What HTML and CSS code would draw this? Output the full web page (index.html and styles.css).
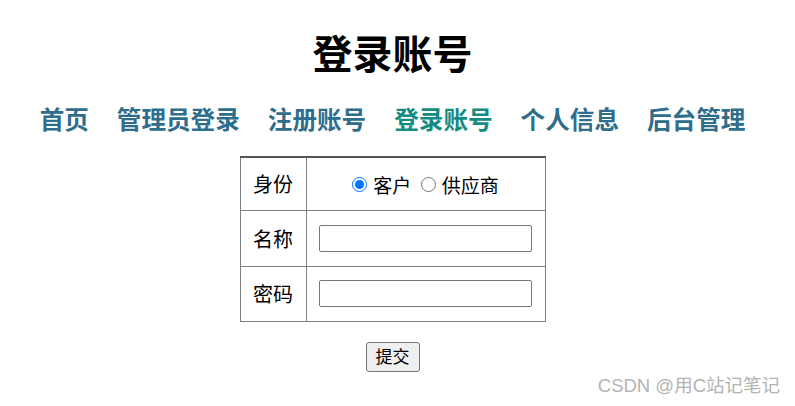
FILE: index.html
```html
<!DOCTYPE html>
<html lang="zh">
<head>
<meta charset="utf-8">
<link rel="stylesheet" href="styles.css">
</head>
<body>
<div class="page">
  <h1 class="title">登录账号</h1>
  <nav class="nav">
    <a class="nav-link">首页</a>
    <a class="nav-link">管理员登录</a>
    <a class="nav-link">注册账号</a>
    <a class="nav-link active">登录账号</a>
    <a class="nav-link">个人信息</a>
    <a class="nav-link">后台管理</a>
  </nav>
  <form class="form">
    <table class="login">
      <tr class="row row-1">
        <td class="label">身份</td>
        <td class="field center">
          <label class="radio"><input type="radio" name="role" checked>客户</label>
          <label class="radio"><input type="radio" name="role">供应商</label>
        </td>
      </tr>
      <tr class="row">
        <td class="label">名称</td>
        <td class="field"><input class="text" type="text"></td>
      </tr>
      <tr class="row row-3">
        <td class="label">密码</td>
        <td class="field"><input class="text" type="password"></td>
      </tr>
    </table>
    <div class="actions"><button class="submit" type="button">提交</button></div>
  </form>
</div>
<div class="watermark">CSDN @用C站记笔记</div>
</body>
</html>
```
FILE: styles.css
```css
html, body {
  margin: 0;
  padding: 0;
  background: #fff;
}
body {
  font-family: "Microsoft YaHei", "Noto Sans CJK SC", sans-serif;
  width: 795px;
  height: 406px;
  overflow: hidden;
  position: relative;
}
.page {
  width: 785px;
  display: flex;
  flex-direction: column;
  align-items: center;
}
.title {
  margin: 26px 0 0;
  font-size: 40px;
  line-height: 52px;
  font-weight: 700;
  color: #000;
}
.nav {
  display: flex;
  gap: 28px;
  margin-top: 24px;
}
.nav-link {
  font-size: 24.6px;
  line-height: 32px;
  font-weight: 700;
  color: #2f6d8c;
  text-decoration: none;
}
.nav-link.active {
  color: #138c83;
}
.form {
  margin-top: 22px;
  display: flex;
  flex-direction: column;
  align-items: center;
}
.login {
  border-collapse: collapse;
  border-top: 2px solid #555;
  font-size: 20px;
}
.login td {
  border: 1px solid #808080;
  padding: 0;
}
.row {
  height: 56px;
}
.row-1 {
  height: 53px;
}
.row-3 {
  height: 55px;
}
.label {
  width: 65px;
  text-align: center;
}
.field {
  width: 238px;
  text-align: center;
}
.radio {
  display: inline-flex;
  align-items: center;
  font-size: 19px;
}
.radio + .radio {
  margin-left: 5px;
}
.radio input {
  margin: 0 6px 0 0;
  width: 15px;
  height: 15px;
}
.text {
  width: 213px;
  height: 27px;
  box-sizing: border-box;
  border: 1px solid #767676;
  border-radius: 2px;
  padding: 1px 4px;
  display: block;
  margin: 0 auto;
}
.actions {
  margin-top: 20px;
}
.submit {
  font-family: inherit;
  font-size: 17px;
  line-height: 22px;
  padding: 2px 9px 3px;
  height: 30px;
  border: 1px solid #767676;
  border-radius: 3px;
  background: #efefef;
  color: #000;
}
.watermark {
  position: absolute;
  right: 15px;
  top: 374px;
  font-family: "Liberation Sans", "Noto Sans CJK SC", sans-serif;
  font-size: 18.5px;
  line-height: 24px;
  color: #b3b3b3;
}
```
